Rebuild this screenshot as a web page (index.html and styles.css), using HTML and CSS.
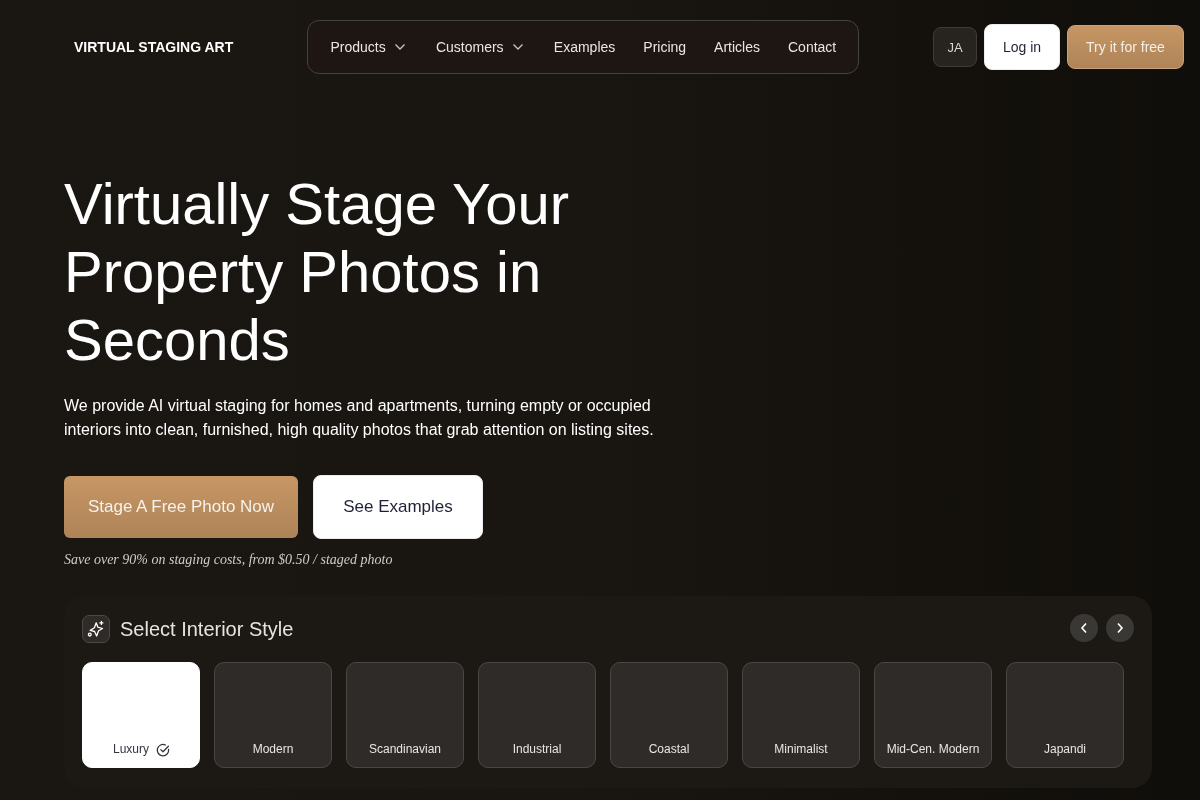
FILE: index.html
```html
<!DOCTYPE html>
<html lang="en">
<head>
<title>Virtual Staging Art</title>
<meta charset="utf-8">
<meta name="viewport" content="width=device-width, initial-scale=1">
<link rel="stylesheet" href="styles.css">
</head>
<body>

<header class="topbar">
  <a class="logo" href="#">VIRTUAL STAGING ART</a>
  <nav class="nav">
    <a href="#" class="nav_item has_menu">Products
      <svg class="chevron" width="12" height="12" viewBox="0 0 12 12"><path d="M1.5 3.5L6 8l4.5-4.5"/></svg>
    </a>
    <a href="#" class="nav_item has_menu">Customers
      <svg class="chevron" width="12" height="12" viewBox="0 0 12 12"><path d="M1.5 3.5L6 8l4.5-4.5"/></svg>
    </a>
    <a href="#" class="nav_item">Examples</a>
    <a href="#" class="nav_item">Pricing</a>
    <a href="#" class="nav_item">Articles</a>
    <a href="#" class="nav_item">Contact</a>
  </nav>
  <div class="actions">
    <button class="lang">JA</button>
    <a href="#" class="login">Log in</a>
    <a href="#" class="try">Try it for free</a>
  </div>
</header>

<main class="hero">
  <h1>Virtually Stage Your Property Photos in Seconds</h1>
  <p class="lead">We provide AI virtual staging for homes and apartments, turning empty or occupied interiors into clean, furnished, high quality photos that grab attention on listing sites.</p>
  <div class="cta">
    <a href="#" class="cta_primary">Stage A Free Photo Now</a>
    <a href="#" class="cta_secondary">See Examples</a>
  </div>
  <p class="note">Save over 90% on staging costs, from $0.50 / staged photo</p>

  <section class="styles_panel">
    <div class="panel_head">
      <span class="panel_icon">
        <svg width="18" height="18" viewBox="0 0 18 18" fill="none" stroke="#fff" stroke-width="1.3" stroke-linejoin="round" stroke-linecap="round">
          <path d="M9.2 2.8l1.6 4.3 4.7 1.4-3.9 2.2-2 5.3-2-4.5-4.4-1.1 4.2-2.6z"/>
          <path d="M14.4 1.4v3M12.9 2.9h3"/>
          <circle cx="2.8" cy="14.6" r="1.4"/>
        </svg>
      </span>
      <h2>Select Interior Style</h2>
      <div class="arrows">
        <button class="arrow"><svg width="12" height="12" viewBox="0 0 12 12"><path d="M8 1.5L4 6l4 4.5"/></svg></button>
        <button class="arrow"><svg width="12" height="12" viewBox="0 0 12 12"><path d="M4 1.5L8 6l-4 4.5"/></svg></button>
      </div>
    </div>
    <ul class="style_list">
      <li class="style_item selected">Luxury
        <svg class="check" width="14" height="14" viewBox="0 0 14 14" fill="none" stroke="#33363f" stroke-width="1.3" stroke-linecap="round" stroke-linejoin="round"><path d="M12.6 6.4A5.7 5.7 0 1 1 9.4 2"/><path d="M4.8 6.6l2.2 2.2 5.4-5.6"/></svg>
      </li>
      <li class="style_item">Modern</li>
      <li class="style_item">Scandinavian</li>
      <li class="style_item">Industrial</li>
      <li class="style_item">Coastal</li>
      <li class="style_item">Minimalist</li>
      <li class="style_item">Mid-Cen. Modern</li>
      <li class="style_item">Japandi</li>
    </ul>
  </section>
</main>

</body>
</html>
```

FILE: styles.css
```css
html, body {
  height: 100%;
}
body {
  margin: 0;
  overflow: hidden;
  font-family: "Liberation Sans", Arial, sans-serif;
  color: #fff;
  background: linear-gradient(90deg, #1a1612 0%, #191510 50%, #100e0a 100%);
}
a {
  color: inherit;
  text-decoration: none;
}

.topbar {
  display: flex;
  align-items: center;
  height: 94px;
  padding: 0 16px 0 74px;
  box-sizing: border-box;
  will-change: transform;
}
.logo {
  width: 233px;
  font-size: 14px;
  font-weight: 700;
}
.nav {
  display: flex;
  align-items: center;
  gap: 28px;
  width: 552px;
  height: 54px;
  box-sizing: border-box;
  padding: 0 22.4px;
  border: 1px solid #45423e;
  border-radius: 12px;
  background: #1e1612;
  font-size: 14px;
  color: #e8e6e3;
}
.nav_item {
  display: flex;
  align-items: center;
  gap: 8px;
  white-space: nowrap;
}
.has_menu {
  margin-right: 2.25px;
}
.chevron {
  fill: none;
  stroke: #c9c7c4;
  stroke-width: 1.3;
}
.actions {
  display: flex;
  align-items: center;
  gap: 7px;
  margin-left: auto;
}
.lang {
  width: 44px;
  height: 40px;
  border: 1px solid #3f3c38;
  border-radius: 8px;
  background: #272420;
  color: #d8d6d3;
  font: 13px "Liberation Sans", Arial, sans-serif;
}
.login {
  display: flex;
  align-items: center;
  justify-content: center;
  width: 76px;
  height: 46px;
  box-sizing: border-box;
  border: 1px solid #ececee;
  border-radius: 8px;
  background: #fff;
  color: #1f2135;
  font-size: 14px;
}
.try {
  display: flex;
  align-items: center;
  justify-content: center;
  width: 117px;
  height: 44px;
  box-sizing: border-box;
  border: 1px solid #c9a27c;
  border-radius: 8px;
  background: linear-gradient(180deg, #c79664, #ae8458);
  color: #f3eee8;
  font-size: 14px;
}

.hero {
  padding: 76px 48px 0 64px;
  will-change: transform;
}
h1 {
  width: 640px;
  margin: 0;
  font-size: 58px;
  font-weight: 400;
  line-height: 68px;
}
.lead {
  width: 610px;
  margin: 20px 0 0;
  font-size: 16px;
  line-height: 24px;
}
.cta {
  display: flex;
  align-items: center;
  gap: 15px;
  margin-top: 33px;
  font-size: 17px;
}
.cta_primary {
  display: flex;
  align-items: center;
  justify-content: center;
  width: 234px;
  height: 62px;
  border-radius: 6px;
  background: linear-gradient(180deg, #c79664, #ae8458);
  color: #f6f2ec;
}
.cta_secondary {
  display: flex;
  align-items: center;
  justify-content: center;
  width: 170px;
  height: 64px;
  box-sizing: border-box;
  border: 1px solid #ececee;
  border-radius: 8px;
  background: #fff;
  color: #1f2135;
}
.note {
  margin: 12px 0 0;
  font-family: "Liberation Serif", "Times New Roman", serif;
  font-size: 14px;
  font-style: italic;
  line-height: 18px;
  color: #cfccc8;
}

.styles_panel {
  height: 192px;
  box-sizing: border-box;
  margin-top: 27px;
  padding: 18px 18px 0;
  border-radius: 20px;
  background: #1c1915;
}
.panel_head {
  display: flex;
  align-items: center;
  height: 30px;
}
.panel_icon {
  display: flex;
  align-items: center;
  justify-content: center;
  width: 28px;
  height: 28px;
  box-sizing: border-box;
  margin-right: 10px;
  border: 1px solid #4a4845;
  border-radius: 7px;
  background: #2e2b28;
}
h2 {
  margin: 0;
  font-size: 20px;
  font-weight: 400;
  color: #e6e4e1;
}
.arrows {
  display: flex;
  gap: 8px;
  margin-left: auto;
  align-self: flex-start;
}
.arrow {
  display: flex;
  align-items: center;
  justify-content: center;
  width: 28px;
  height: 28px;
  padding: 0;
  border: none;
  border-radius: 50%;
  background: #3a3835;
}
.arrow svg {
  fill: none;
  stroke: #fff;
  stroke-width: 1.6;
}
.style_list {
  display: flex;
  gap: 14px;
  margin: 18px 0 0;
  padding: 0;
  list-style: none;
}
.style_item {
  display: flex;
  align-items: flex-end;
  justify-content: center;
  gap: 6px;
  width: 118px;
  height: 106px;
  box-sizing: border-box;
  padding-bottom: 11px;
  border: 1px solid #4a4845;
  border-radius: 10px;
  background: #2e2b28;
  font-size: 12px;
  line-height: 14px;
  color: #e8e6e3;
}
.style_item.selected {
  gap: 7px;
  padding-left: 1px;
  border-color: #fff;
  background: #fff;
  color: #33363f;
}
.check {
  margin-bottom: -1px;
}
```
